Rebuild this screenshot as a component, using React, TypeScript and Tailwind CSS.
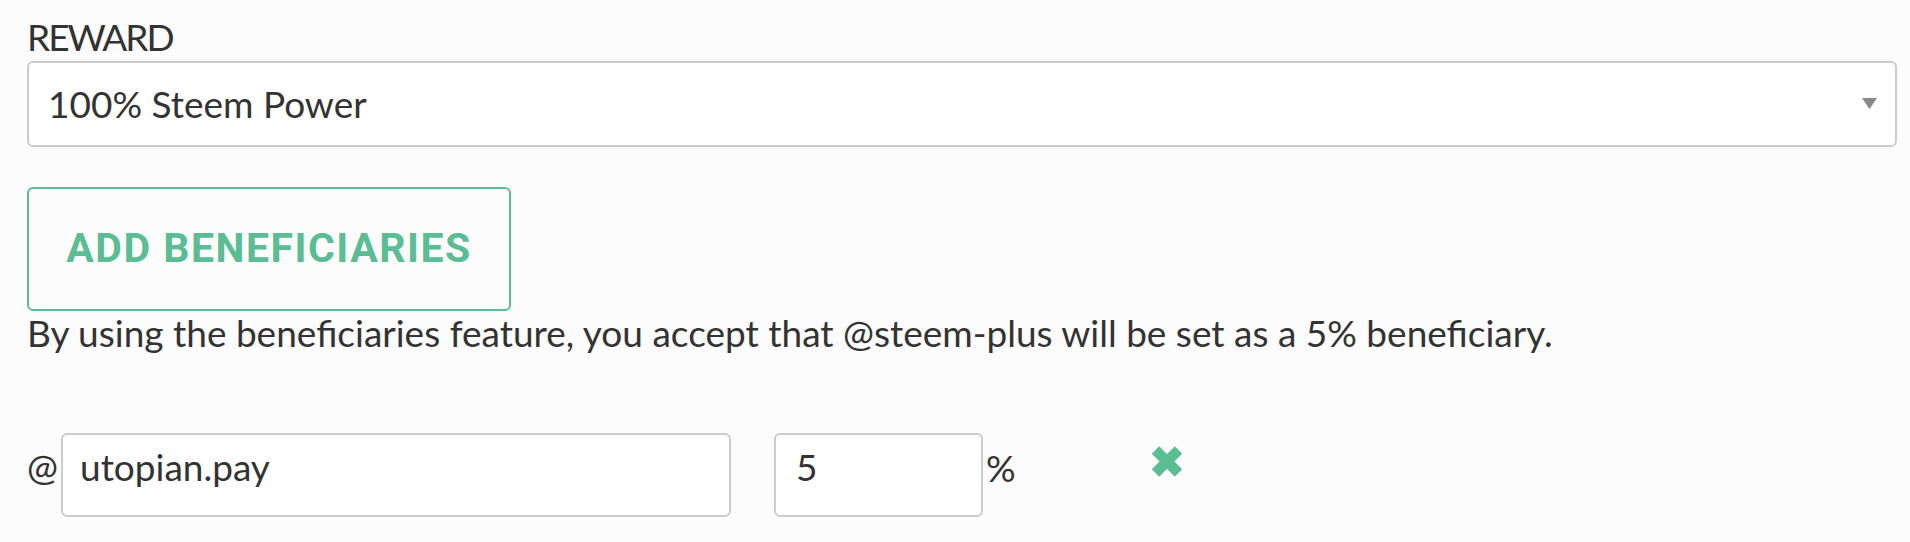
import React from "react";

export default function App() {
  return (
    <div className="w-[1910px] h-[542px] bg-[#fcfcfc] text-[#333333] pl-[27px] pr-[13px] overflow-hidden" style={{ fontFamily: "Lato, 'Noto Sans', sans-serif" }}>
      <div className="h-[61px] flex items-end pb-[2px] text-[37px] leading-[44px] tracking-[-2px]">REWARD</div>
      <div className="relative h-[86px] border-2 border-[#cccccc] rounded-[6px] bg-white flex items-center pl-[19px] text-[37px]">
        <span>100% Steem Power</span>
        <svg className="absolute right-[18px] top-[35px]" width="15" height="11" viewBox="0 0 15 11">
          <polygon points="0,0 15,0 7.5,11" fill="#888888" />
        </svg>
      </div>
      <div className="mt-[40px]">
        <button className="w-[484px] h-[124px] border-2 border-[#5bbd93] rounded-[6px] bg-transparent text-[#5bbd93] text-[41px] font-bold tracking-[1.5px]" style={{ fontFamily: "Roboto, 'Liberation Sans', sans-serif" }}>
          ADD BENEFICIARIES
        </button>
      </div>
      <div className="text-[37px] leading-[48px] mt-[-2px]">
        By using the beneficiaries feature, you accept that @steem-plus will be set as a 5% beneficiary.
      </div>
      <div className="mt-[76px] flex items-start">
        <span className="text-[37px] leading-[48px] pt-[10px] w-[34px]">@</span>
        <div className="w-[670px] h-[84px] border-2 border-[#cccccc] rounded-[6px] bg-white pl-[17px] pt-[8px] text-[37px] leading-[48px]">utopian.pay</div>
        <div className="ml-[43px] w-[209px] h-[84px] border-2 border-[#cccccc] rounded-[6px] bg-white pl-[20px] pt-[8px] text-[37px] leading-[48px]">5</div>
        <div className="w-[167px] text-[37px] leading-[48px] pt-[11px] pl-[3px]">%</div>
        <svg className="mt-[12px]" width="34" height="33" viewBox="0 0 34 33">
          <line x1="5.5" y1="5" x2="28.5" y2="28" stroke="#5bbd93" strokeWidth="10.5" />
          <line x1="28.5" y1="5" x2="5.5" y2="28" stroke="#5bbd93" strokeWidth="10.5" />
        </svg>
      </div>
    </div>
  );
}
